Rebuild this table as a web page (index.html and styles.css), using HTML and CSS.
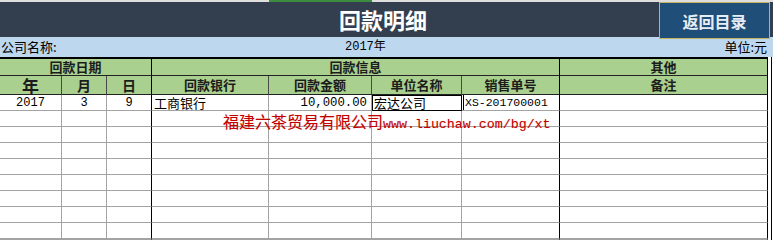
FILE: index.html
```html
<!DOCTYPE html>
<html lang="zh">
<head>
<meta charset="utf-8">
<title>回款明细</title>
<link rel="stylesheet" href="styles.css">
</head>
<body>
<div class="page">
  <div class="ruler"><span class="ruler-sel"></span></div>
  <header class="titlebar"><h1 class="title">回款明细</h1></header>
  <a class="back-btn">返回目录</a>
  <div class="infobar">
    <span class="company">公司名称:</span>
    <span class="year">2017年</span>
    <span class="unit">单位:元</span>
  </div>
  <div class="sheet">
    <div class="grid">
      <div class="c h sep span3">回款日期</div>
      <div class="c h sep span4">回款信息</div>
      <div class="c h sep">其他</div>

      <div class="c h big">年</div>
      <div class="c h mid">月</div>
      <div class="c h mid sep">日</div>
      <div class="c h">回款银行</div>
      <div class="c h">回款金额</div>
      <div class="c h">单位名称</div>
      <div class="c h sep">销售单号</div>
      <div class="c h sep">备注</div>

      <div class="c num center">2017</div>
      <div class="c num center">3</div>
      <div class="c num center sep">9</div>
      <div class="c left">工商银行</div>
      <div class="c num right amount">10,000.00</div>
      <div class="c left boxed">宏达公司</div>
      <div class="c num left dbl sep code">XS-201700001</div>
      <div class="c sep"></div>

      <div class="c"></div><div class="c"></div><div class="c sep"></div><div class="c"></div><div class="c"></div><div class="c"></div><div class="c sep"></div><div class="c sep"></div>
      <div class="c"></div><div class="c"></div><div class="c sep"></div><div class="c"></div><div class="c"></div><div class="c"></div><div class="c sep"></div><div class="c sep"></div>
      <div class="c"></div><div class="c"></div><div class="c sep"></div><div class="c"></div><div class="c"></div><div class="c"></div><div class="c sep"></div><div class="c sep"></div>
      <div class="c"></div><div class="c"></div><div class="c sep"></div><div class="c"></div><div class="c"></div><div class="c"></div><div class="c sep"></div><div class="c sep"></div>
      <div class="c"></div><div class="c"></div><div class="c sep"></div><div class="c"></div><div class="c"></div><div class="c"></div><div class="c sep"></div><div class="c sep"></div>
      <div class="c"></div><div class="c"></div><div class="c sep"></div><div class="c"></div><div class="c"></div><div class="c"></div><div class="c sep"></div><div class="c sep"></div>
      <div class="c"></div><div class="c"></div><div class="c sep"></div><div class="c"></div><div class="c"></div><div class="c"></div><div class="c sep"></div><div class="c sep"></div>
      <div class="c"></div><div class="c"></div><div class="c sep"></div><div class="c"></div><div class="c"></div><div class="c"></div><div class="c sep"></div><div class="c sep"></div>
      <div class="c"></div><div class="c"></div><div class="c sep"></div><div class="c"></div><div class="c"></div><div class="c"></div><div class="c sep"></div><div class="c sep"></div>
    </div>
    <div class="edge"></div>
  </div>
  <div class="watermark">福建六茶贸易有限公司<span class="wm-url">www.liuchaw.com/bg/xt</span></div>
</div>
</body>
</html>
```

FILE: styles.css
```css
* { box-sizing: border-box; }
html, body { margin: 0; padding: 0; background: #fff; }
body {
  font-family: "Noto Sans CJK SC", "DejaVu Sans", sans-serif;
  font-size: 13px;
  color: #000;
}
.page {
  position: relative;
  width: 773px;
  height: 246px;
  overflow: hidden;
}
.ruler {
  height: 2px;
  background: #dedede;
  display: flex;
}
.ruler-sel {
  margin-left: 269px;
  width: 103px;
  background: #3c8d40;
}
.titlebar {
  height: 35px;
  background: #333f4f;
  display: flex;
  align-items: center;
  justify-content: center;
  padding-right: 7px;
}
.title {
  margin: 0;
  color: #fff;
  font-size: 22px;
  font-weight: 700;
  line-height: 35px;
}
.back-btn {
  position: absolute;
  left: 659px;
  top: 2px;
  width: 111px;
  height: 37px;
  border: 1px solid #c6b35e;
  background: #1f4e78;
  color: #e6edf4;
  font-size: 16px;
  font-weight: 700;
  display: flex;
  align-items: center;
  justify-content: center;
}
.infobar {
  height: 20px;
  background: #bdd7ee;
  display: grid;
  grid-template-columns: 344px 1fr auto;
  align-items: center;
  padding: 0 6px 0 1px;
  line-height: 20px;
}
.year { font-family: "Liberation Mono", "Noto Sans CJK SC", monospace; font-size: 12px; }
.year, .unit, .company { white-space: nowrap; }
.sheet {
  display: flex;
}
.grid {
  width: 768px;
  display: grid;
  grid-template-columns: 62px 45px 45px 117px 103px 90px 98px 208px;
  grid-template-rows: 17px 19px repeat(9, 16px);
  border-top: 2px solid #000;
}
.edge {
  width: 1px;
  margin-left: 3px;
  background: #000;
}
.c {
  border-right: 1px solid #a3a3a3;
  border-bottom: 1px solid #a3a3a3;
  display: flex;
  align-items: center;
  white-space: nowrap;
  line-height: 14px;
  min-width: 0;
}
.c.sep { border-right-color: #000; }
.h {
  background: #a9d08e;
  justify-content: center;
  font-weight: 700;
  font-size: 13px;
  color: #1c1c1c;
  border-right-color: #4a4a4a;
  border-bottom-color: #222;
}
.h.sep { border-right-color: #000; }
.h.big { font-size: 17px; line-height: 17px; }
.h.mid { font-size: 14px; }
.span3 { grid-column: span 3; }
.span4 { grid-column: span 4; }
.center { justify-content: center; }
.left { justify-content: flex-start; padding-left: 2px; }
.right { justify-content: flex-end; padding-right: 4px; }
.num { font-family: "Liberation Mono", monospace; font-size: 12px; }
.amount { font-size: 12.3px; }
.code { font-size: 11.5px; }
.boxed {
  border-right-color: #000;
  border-bottom-color: #000;
  box-shadow: inset 1px 1px 0 #000;
}
.dbl {
  box-shadow: inset 1px 0 0 #fff, inset 2px 0 0 #000;
  padding-left: 3px;
}
.watermark {
  position: absolute;
  left: 223px;
  top: 111px;
  color: #c00000;
  font-size: 16px;
  line-height: 20px;
  white-space: nowrap;
  text-shadow: 0 0 1px rgba(255, 150, 130, 0.6);
}
.wm-url {
  font-family: "Liberation Mono", monospace;
  font-size: 13.3px;
}
```
